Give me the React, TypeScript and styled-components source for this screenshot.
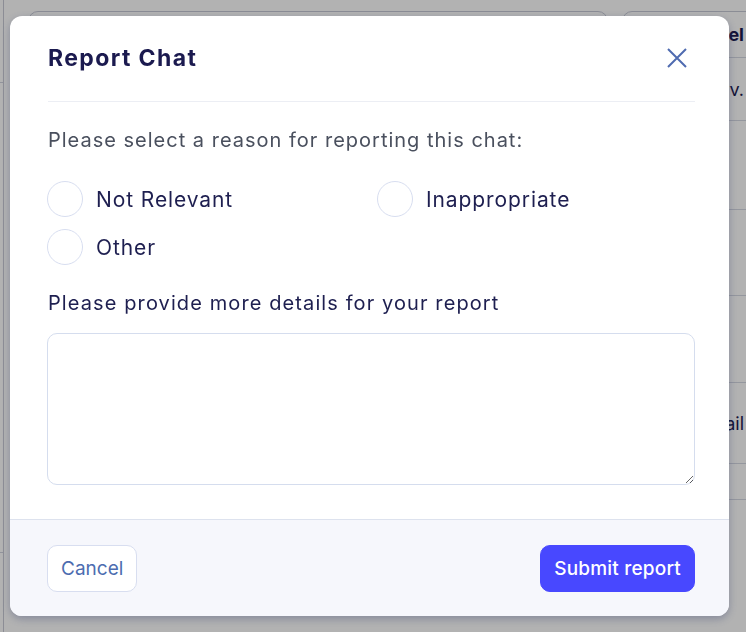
import React from "react";
import styled, { createGlobalStyle } from "styled-components";

const Global = createGlobalStyle`
  html, body { margin: 0; padding: 0; }
  body {
    width: 746px;
    height: 632px;
    overflow: hidden;
    font-family: Inter, "Noto Sans", sans-serif;
    background: #ffffff;
  }
  * { box-sizing: border-box; }
`;

const Page = styled.div`
  width: 746px;
  height: 632px;
  display: flex;
  overflow: hidden;
  background: #ffffff;
`;

const Side = styled.div`
  width: 4px;
  flex: none;
  border-right: 1px solid #c9cbd6;
  display: flex;
  flex-direction: column;
`;

const SideBlock = styled.div<{ $h: number }>`
  height: ${(p) => p.$h}px;
  border-bottom: 1px solid #d0d3de;
  flex: none;
`;

const Main = styled.div`
  flex: 1;
  min-width: 0;
  display: flex;
  flex-direction: column;
  padding-left: 16px;
  position: relative;
`;

const TopBar = styled.div`
  display: flex;
  gap: 14px;
  padding: 11px 0 0 8px;
  height: 58px;
  overflow: hidden;
  border-bottom: 1px solid #d5d8e2;
`;

const SearchBox = styled.div<{ $w: number }>`
  width: ${(p) => p.$w}px;
  height: 60px;
  border: 1px solid #c7cad6;
  border-radius: 10px;
  flex: none;
`;

const HeaderCell = styled.div`
  position: absolute;
  top: 24px;
  right: 2px;
  font-weight: 700;
  font-size: 18px;
  color: #1b1a4f;
`;

const TableRow = styled.div<{ $h: number }>`
  height: ${(p) => p.$h}px;
  border-bottom: 1px solid #d5d8e2;
  display: flex;
  align-items: center;
  justify-content: flex-end;
  padding-right: 2px;
  font-size: 18px;
  color: #1b1a4f;
  white-space: nowrap;
`;

const Overlay = styled.div`
  position: fixed;
  inset: 0;
  background: rgba(0, 0, 0, 0.3);
  padding: 16px 17px 16px 10px;
`;

const Modal = styled.div`
  width: 719px;
  height: 600px;
  background: #ffffff;
  border-radius: 12px;
  overflow: hidden;
  display: flex;
  flex-direction: column;
  box-shadow: 0 3px 8px rgba(50, 60, 110, 0.35);
`;

const Header = styled.div`
  margin: 0 34px 0 38px;
  height: 86px;
  border-bottom: 1px solid #eceef4;
  display: flex;
  align-items: center;
  justify-content: space-between;
  padding-bottom: 2px;
`;

const Title = styled.h2`
  margin: 0;
  font-size: 23px;
  font-weight: 700;
  color: #1b1a4f;
  letter-spacing: 1.4px;
`;

const CloseBtn = styled.button`
  border: 0;
  background: none;
  padding: 0;
  margin-right: 8px;
  width: 20px;
  height: 20px;
  display: flex;
  color: #4f6bb0;
  cursor: pointer;
`;

const Body = styled.div`
  flex: 1;
  padding: 25px 34px 0 38px;
  display: flex;
  flex-direction: column;
`;

const Prompt = styled.p<{ $dark?: boolean }>`
  margin: 0;
  font-size: 20px;
  line-height: 26px;
  white-space: nowrap;
  letter-spacing: ${(p) => (p.$dark ? 1.1 : 1.0)}px;
  color: ${(p) => (p.$dark ? "#1e1f50" : "#4a505e")};
`;

const Options = styled.div`
  display: grid;
  grid-template-columns: 1fr 1fr;
  column-gap: 12px;
  row-gap: 12px;
  margin: 28px 0 25px -1px;
`;

const Option = styled.label`
  display: flex;
  align-items: center;
  gap: 13px;
  font-size: 21px;
  letter-spacing: 0.9px;
  color: #1e1f50;
  cursor: pointer;
`;

const Circle = styled.span`
  width: 36px;
  height: 36px;
  border-radius: 50%;
  border: 1px solid #d8def0;
  background: #ffffff;
  flex: none;
`;

const TextArea = styled.textarea`
  margin: 17px 0 0 -1px;
  width: 648px;
  height: 152px;
  border: 1px solid #d5ddee;
  border-radius: 10px;
  resize: vertical;
  font-family: inherit;
  font-size: 16px;
  outline: none;
`;

const Footer = styled.div`
  height: 97px;
  background: #f6f7fc;
  border-top: 1px solid #dde2ee;
  display: flex;
  align-items: flex-start;
  justify-content: space-between;
  padding: 25px 34px 0 37px;
`;

const Button = styled.button<{ $primary?: boolean }>`
  height: 47px;
  border-radius: 10px;
  font-family: inherit;
  font-size: 19px;
  cursor: pointer;
  padding: 0 13px;
  letter-spacing: ${(p) => (p.$primary ? 0.2 : 0)}px;
  border: 1px solid ${(p) => (p.$primary ? "#4848ff" : "#d8def0")};
  background: ${(p) => (p.$primary ? "#4848ff" : "#ffffff")};
  color: ${(p) => (p.$primary ? "#ffffff" : "#4c6cb0")};
  font-weight: ${(p) => (p.$primary ? 500 : 400)};
`;

export default function App() {
  return (
    <>
      <Global />
      <Page>
        <Side>
          <SideBlock $h={83} />
          <SideBlock $h={470} />
        </Side>
        <Main>
          <TopBar>
            <SearchBox $w={580} />
            <SearchBox $w={300} />
          </TopBar>
          <HeaderCell>Label</HeaderCell>
          <TableRow $h={63}>v.</TableRow>
          <TableRow $h={89} />
          <TableRow $h={86} />
          <TableRow $h={87} />
          <TableRow $h={81}>Email</TableRow>
          <TableRow $h={36} />
        </Main>
      </Page>
      <Overlay>
        <Modal role="dialog">
          <Header>
            <Title>Report Chat</Title>
            <CloseBtn aria-label="Close">
              <svg width="20" height="20" viewBox="0 0 20 20" fill="none">
                <path d="M1 1 L19 19 M19 1 L1 19" stroke="currentColor" strokeWidth="2" />
              </svg>
            </CloseBtn>
          </Header>
          <Body>
            <Prompt>Please select a reason for reporting this chat:</Prompt>
            <Options>
              <Option>
                <Circle />
                Not Relevant
              </Option>
              <Option>
                <Circle />
                Inappropriate
              </Option>
              <Option>
                <Circle />
                Other
              </Option>
            </Options>
            <Prompt $dark>Please provide more details for your report</Prompt>
            <TextArea />
          </Body>
          <Footer>
            <Button>Cancel</Button>
            <Button $primary>Submit report</Button>
          </Footer>
        </Modal>
      </Overlay>
    </>
  );
}
